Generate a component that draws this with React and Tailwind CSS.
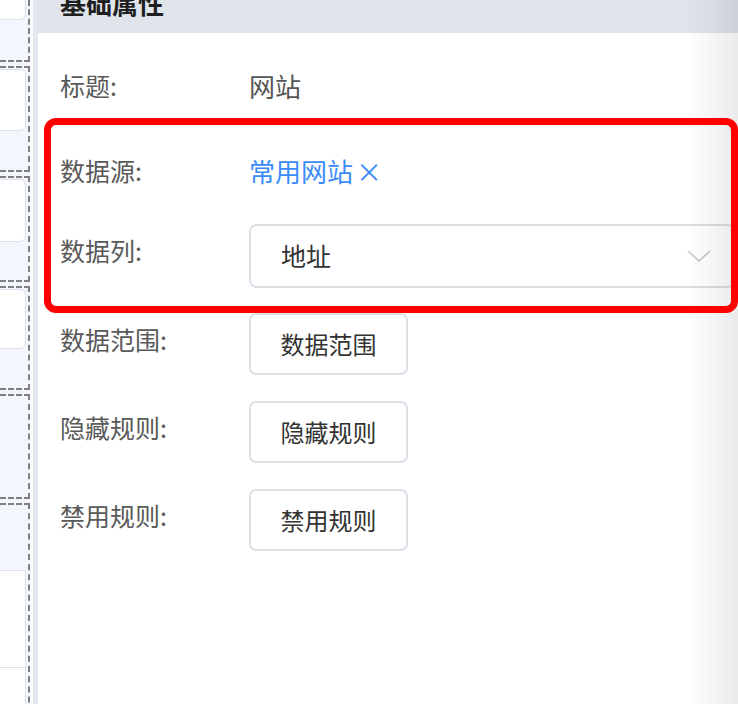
import { useState } from "react";

const font = { fontFamily: '"Noto Sans CJK SC", "Noto Sans", sans-serif' };

// dashed outline boxes in the narrow canvas strip on the left
const boxes = [
  { id: 1, h: "h-[62px]", top: false, card: "h-[20px] rounded-br-[6px]", first: true },
  { id: 2, h: "h-[106px]", top: true, card: "h-[62px] rounded-r-[6px]" },
  { id: 3, h: "h-[106px]", top: true, card: "h-[63px] rounded-r-[6px]" },
  { id: 4, h: "h-[104px]", top: true, card: "h-[60px] rounded-r-[6px]" },
  { id: 5, h: "h-[105px]", top: true, card: null },
];

const CanvasStrip = () => (
  <div className="w-[38px] shrink-0 flex bg-[#f3f6fc]">
    <div className="w-[30px] flex flex-col gap-[4px]">
      {boxes.map((b) => (
        <div
          key={b.id}
          className={`${b.h} shrink-0 border-r-2 border-b-2 border-dashed border-[#808080] ${
            b.top ? "border-t-2 pt-[1px]" : ""
          }`}
        >
          {b.card && (
            <div
              className={`${b.card} w-[26px] bg-white border border-l-0 border-[#dde2ea] ${
                b.first ? "border-t-0" : ""
              }`}
            />
          )}
        </div>
      ))}
      <div className="flex-1 min-h-[220px] border-t-2 border-r-2 border-dashed border-[#808080] pt-[65px]">
        <div className="w-[26px] h-[98px] bg-white border-t border-b border-r border-[#dde2ea]" />
        <div className="w-[26px] h-[60px] bg-white border-r border-[#dde2ea]" />
      </div>
    </div>
    <div className="w-[3px] bg-[#fafbfd]" />
    <div className="w-[5px] bg-[#e3e7ef]" />
  </div>
);

const Label = ({ children, shift }) => (
  <div className={`w-[189px] shrink-0 text-[25px] text-[#5a5a5a] ${shift ? "-mt-[9px]" : ""}`}>
    {children}
  </div>
);

const RuleButton = ({ text }) => (
  <button className="w-[159px] h-[62px] rounded-[7px] border-2 border-[#dcdfe6] bg-white text-[24px] text-[#333]">
    {text}
  </button>
);

export default function App() {
  const [source, setSource] = useState("常用网站");

  return (
    <div className="relative w-[738px] h-[704px] overflow-hidden flex bg-white" style={font}>
      <CanvasStrip />

      <div className="flex-1 flex flex-col">
        {/* header */}
        <div className="h-[33px] shrink-0 bg-[#e0e4eb] pl-[22px] overflow-hidden">
          <div className="-mt-[12px] text-[26px] leading-[30px] font-bold text-[#1f1f1f]">基础属性</div>
        </div>

        {/* properties */}
        <div className="pl-[22px] pt-[10px] flex flex-col">
          <div className="h-[85px] flex items-center">
            <Label>标题:</Label>
            <div className="text-[26px] text-[#555]">网站</div>
          </div>

          <div className="h-[85px] flex items-center">
            <Label>数据源:</Label>
            <div className="flex items-center text-[26px] text-[#3a8cfa] cursor-pointer" onClick={() => setSource("")}>
              <span>{source}</span>
              <span className="ml-[3px]">×</span>
            </div>
          </div>

          <div className="h-[85px] flex items-center">
            <Label shift>数据列:</Label>
            <div className="w-[486px] h-[64px] shrink-0 flex items-center justify-between rounded-[8px] border-2 border-[#dcdfe6] pl-[30px] pr-[22px]">
              <span className="text-[25px] text-[#333]">地址</span>
              <svg width="24" height="14" viewBox="0 0 24 14" fill="none">
                <polyline points="1,2 12,12 23,2" stroke="#c3c7cf" strokeWidth="1.6" />
              </svg>
            </div>
          </div>

          <div className="h-[88px] mt-[2px] flex items-center">
            <Label shift>数据范围:</Label>
            <RuleButton text="数据范围" />
          </div>
          <div className="h-[88px] flex items-center">
            <Label shift>隐藏规则:</Label>
            <RuleButton text="隐藏规则" />
          </div>
          <div className="h-[88px] flex items-center">
            <Label shift>禁用规则:</Label>
            <RuleButton text="禁用规则" />
          </div>
        </div>
      </div>

      {/* right edge shade */}
      <div className="absolute top-0 right-0 bottom-0 w-[52px] bg-linear-to-l from-black/[0.08] to-transparent pointer-events-none" />

      {/* red highlight annotation */}
      <div className="absolute left-[44px] top-[118px] w-[694px] h-[195px] rounded-[12px] border-[7px] border-[#ff0000] pointer-events-none" />
    </div>
  );
}
